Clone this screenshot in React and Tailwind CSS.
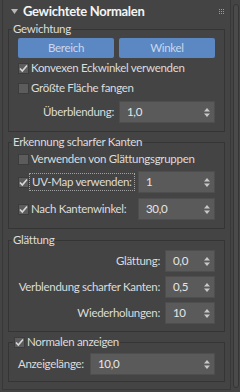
import React from "react";

const Check = ({ checked }) => (
  <span className="flex h-[11px] w-[11px] shrink-0 items-center justify-center border border-[#3c3c3c] bg-[#5c5c5c]">
    {checked && (
      <svg width="9" height="9" viewBox="0 0 9 9">
        <path d="M1 4.5 L3.3 7 L8 1.5" fill="none" stroke="#d8d8d8" strokeWidth="1.6" />
      </svg>
    )}
  </span>
);

const Arrows = () => (
  <svg width="6" height="9" viewBox="0 0 6 9" className="shrink-0">
    <path d="M3 0 L6 3.5 L0 3.5 Z" fill="#c8c8c8" />
    <path d="M3 9 L6 5.5 L0 5.5 Z" fill="#c8c8c8" />
  </svg>
);

const Spinner = ({ value, className }) => (
  <div
    className={`flex h-[22px] shrink-0 items-center justify-between border border-[#4e4e4e] bg-[#5a5a5a] pl-[7px] pr-[4px] text-[#e6e6e6] ${className}`}
  >
    <span>{value}</span>
    <Arrows />
  </div>
);

const CheckRow = ({ checked, label }) => (
  <div className="flex h-[20px] items-center gap-[2px]">
    <Check checked={checked} />
    <span>{label}</span>
  </div>
);

const Group = ({ legend, children, className }) => (
  <fieldset className={`mx-[5px] shrink-0 border border-[#353535] px-[9px] ${className}`}>
    <legend className="ml-[-6px] px-[1px] leading-[14px]">{legend}</legend>
    {children}
  </fieldset>
);

export default function App() {
  return (
    <div
      className="flex h-[392px] w-[240px] bg-[#444444] text-[11.5px] leading-[14px] tracking-[-0.3px] whitespace-nowrap text-[#dcdcdc]"
      style={{ fontFamily: 'Lato, "Liberation Sans", sans-serif' }}
    >
      <div className="ml-[2px] flex h-[390px] w-[229px] shrink-0 flex-col border-x border-b border-[#383838]">
        <div className="flex h-[22px] shrink-0 items-center pl-[8px] pr-[6px]">
          <svg width="7" height="5" viewBox="0 0 7 5">
            <path d="M0 0 L7 0 L3.5 5 Z" fill="#b8b8b8" />
          </svg>
          <span className="ml-[5px] text-[13px] font-bold text-[#f4f4f4]">Gewichtete Normalen</span>
          <div className="ml-auto grid grid-cols-3 gap-[1px]">
            {Array.from({ length: 9 }).map((_, i) => (
              <span key={i} className="h-[1px] w-[1px] bg-[#9a9a9a]" />
            ))}
          </div>
        </div>

        <Group legend="Gewichtung" className="pb-[8px]">
          <div className="mt-[2px] flex gap-[5px]">
            <button className="h-[20px] flex-1 rounded-[2px] bg-[#5b87c3] text-[#c9d8ec]">Bereich</button>
            <button className="h-[20px] flex-1 rounded-[2px] bg-[#5b87c3] text-[#c9d8ec]">Winkel</button>
          </div>
          <CheckRow checked label="Konvexen Eckwinkel verwenden" />
          <CheckRow label="Größte Fläche fangen" />
          <div className="mt-[3px] flex items-center justify-end gap-[5px]">
            <span>Überblendung:</span>
            <Spinner value="1,0" className="w-[96px]" />
          </div>
        </Group>

        <Group legend="Erkennung scharfer Kanten" className="mt-[3px] pb-[8px]">
          <CheckRow label="Verwenden von Glättungsgruppen" />
          <div className="mt-[2px] flex items-center justify-between">
            <div className="flex items-center">
              <Check checked />
              <span className="border border-dotted border-[#a0a0a0] px-[2px] py-[1px]">UV-Map verwenden:</span>
            </div>
            <Spinner value="1" className="w-[77px]" />
          </div>
          <div className="mt-[5px] flex items-center justify-between">
            <div className="flex items-center gap-[2px]">
              <Check checked />
              <span>Nach Kantenwinkel:</span>
            </div>
            <Spinner value="30,0" className="w-[77px]" />
          </div>
        </Group>

        <Group legend="Glättung" className="mt-[4px] pb-[7px]">
          <div className="mt-[3px] flex items-center justify-end gap-[5px]">
            <span>Glättung:</span>
            <Spinner value="0,0" className="w-[50px]" />
          </div>
          <div className="mt-[4px] flex items-center justify-end gap-[5px]">
            <span>Verblendung scharfer Kanten:</span>
            <Spinner value="0,5" className="w-[50px]" />
          </div>
          <div className="mt-[4px] flex items-center justify-end gap-[5px]">
            <span>Wiederholungen:</span>
            <Spinner value="10" className="w-[50px]" />
          </div>
        </Group>

        <fieldset className="mx-[5px] mt-[3px] shrink-0 border border-[#353535] px-[9px] pb-[6px]">
          <legend className="ml-[-5px] flex items-center gap-[2px] px-[1px] leading-[14px]">
            <Check checked />
            <span>Normalen anzeigen</span>
          </legend>
          <div className="mt-[4px] flex items-center justify-between">
            <span>Anzeigelänge:</span>
            <Spinner value="10,0" className="w-[125px]" />
          </div>
        </fieldset>
      </div>

      <div className="ml-[2px] mt-[4px] h-[384px] w-[6px] shrink-0 rounded-[3px] border border-[#353535] bg-[#4a4a4a]" />
    </div>
  );
}
